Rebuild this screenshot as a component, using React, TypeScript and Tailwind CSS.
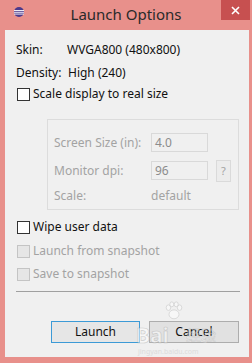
import React from "react"

const font = { fontFamily: '"Noto Sans", "Open Sans", sans-serif' }

function Check({ disabled = false, label }: { disabled?: boolean; label: string }) {
  return (
    <div className="flex h-[16px] items-center">
      <span
        className={
          disabled
            ? "ml-[1px] h-[13px] w-[13px] border border-[#c4c4c4] bg-[#e6e6e6]"
            : "ml-[1px] h-[13px] w-[13px] border border-[#333333] bg-white"
        }
      />
      <span className={disabled ? "ml-[3px] text-[#a3a3a3]" : "ml-[3px] text-[#111]"}>{label}</span>
    </div>
  )
}

export default function App() {
  return (
    <div className="relative flex h-[363px] w-[252px] flex-col bg-[#e8908b] text-[12px] leading-[16px]" style={font}>
      {/* title bar */}
      <div className="relative flex h-[30px] items-center justify-center">
        <svg className="absolute left-[14px] top-[7px]" width="10" height="10" viewBox="0 0 10 10">
          <circle cx="5" cy="5" r="5" fill="#4b3a8c" />
          <rect x="0" y="3" width="10" height="0.9" fill="#fff" />
          <rect x="0" y="4.8" width="10" height="0.9" fill="#fff" />
          <rect x="0" y="6.6" width="10" height="0.9" fill="#fff" />
        </svg>
        <span className="mt-[-2px] text-[15px] text-[#2a2a2a]">Launch Options</span>
        <div className="absolute right-[2px] top-0 flex h-[20px] w-[29px] items-center justify-center bg-[#c75050]">
          <svg width="9" height="9" viewBox="0 0 9 9">
            <path d="M1 1 L8 8 M8 1 L1 8" stroke="#fff" strokeWidth="1.6" />
          </svg>
        </div>
      </div>

      {/* body */}
      <div className="mb-[6px] ml-[5px] mr-[3px] flex flex-1 flex-col bg-[#f0f0f0] pl-[11px]">
        <div className="mt-[12px] flex h-[16px] items-center text-[#111]">
          <span className="w-[51px]">Skin:</span>
          <span>WVGA800 (480x800)</span>
        </div>
        <div className="mt-[7px] flex h-[16px] items-center text-[#111]">
          <span className="w-[52px]">Density:</span>
          <span>High (240)</span>
        </div>
        <div className="mt-[5px]">
          <Check label="Scale display to real size" />
        </div>

        <div className="ml-[31px] mt-[17px] flex h-[91px] w-[192px] flex-col border border-[#dcdcdc] pl-[6px] text-[#a3a3a3]">
          <div className="mt-[13px] flex h-[19px] items-center">
            <span className="w-[97px]">Screen Size (in):</span>
            <span className="flex h-[19px] w-[57px] items-center border border-[#d9d9d9] bg-[#f0f0f0] pl-[3px] text-[#8c8c8c]">4.0</span>
          </div>
          <div className="mt-[9px] flex h-[19px] items-center">
            <span className="w-[97px]">Monitor dpi:</span>
            <span className="flex h-[19px] w-[57px] items-center border border-[#d9d9d9] bg-[#f0f0f0] pl-[3px] text-[#8c8c8c]">96</span>
            <span className="ml-[8px] flex h-[22px] w-[15px] shrink-0 items-center justify-center border border-[#dadada] bg-[#ececec] text-[11px]">?</span>
          </div>
          <div className="mt-[8px] flex h-[16px] items-center">
            <span className="w-[97px]">Scale:</span>
            <span>default</span>
          </div>
        </div>

        <div className="mt-[9px]">
          <Check label="Wipe user data" />
        </div>
        <div className="mt-[8px]">
          <Check disabled label="Launch from snapshot" />
        </div>
        <div className="mt-[7px]">
          <Check disabled label="Save to snapshot" />
        </div>

        <div className="mt-[9px] h-px w-[224px] bg-[#a0a0a0]" />

        <div className="ml-[35px] mt-[29px] flex gap-[9px] text-[#111]">
          <button className="flex h-[22px] w-[89px] items-center justify-center border border-[#3c9ad6] bg-[#e6e6e6]">
            Launch
          </button>
          <button className="flex h-[22px] w-[90px] items-center justify-center border border-[#adadad] bg-[#e1e1e1]">
            Cancel
          </button>
        </div>
      </div>

      {/* watermark */}
      <div className="pointer-events-none absolute left-[136px] top-[300px] h-[60px] w-[100px] opacity-50">
        <svg className="absolute left-[28px] top-0" width="20" height="22" viewBox="0 0 18 18">
          <g fill="#fff" stroke="#aaa" strokeWidth="0.6">
            <ellipse cx="9" cy="12" rx="4.5" ry="4" />
            <ellipse cx="4" cy="6" rx="2" ry="2.5" />
            <ellipse cx="14" cy="6" rx="2" ry="2.5" />
            <ellipse cx="7" cy="3" rx="1.8" ry="2.2" />
            <ellipse cx="11" cy="3" rx="1.8" ry="2.2" />
          </g>
        </svg>
        <span
          className="absolute left-0 top-[24px] text-[21px] font-bold leading-[22px] text-white"
          style={{ WebkitTextStroke: "0.6px #a8a8a8" }}
        >
          Bai
        </span>
        <span
          className="absolute left-[50px] top-[26px] text-[15px] leading-[18px] text-white"
          style={{ fontFamily: '"Noto Sans CJK SC", sans-serif', WebkitTextStroke: "0.4px #a8a8a8" }}
        >
          经验
        </span>
        <span className="absolute left-[2px] top-[48px] text-[7px] leading-[8px] text-[#c8c8c8]">jingyan.baidu.com</span>
      </div>
    </div>
  )
}
